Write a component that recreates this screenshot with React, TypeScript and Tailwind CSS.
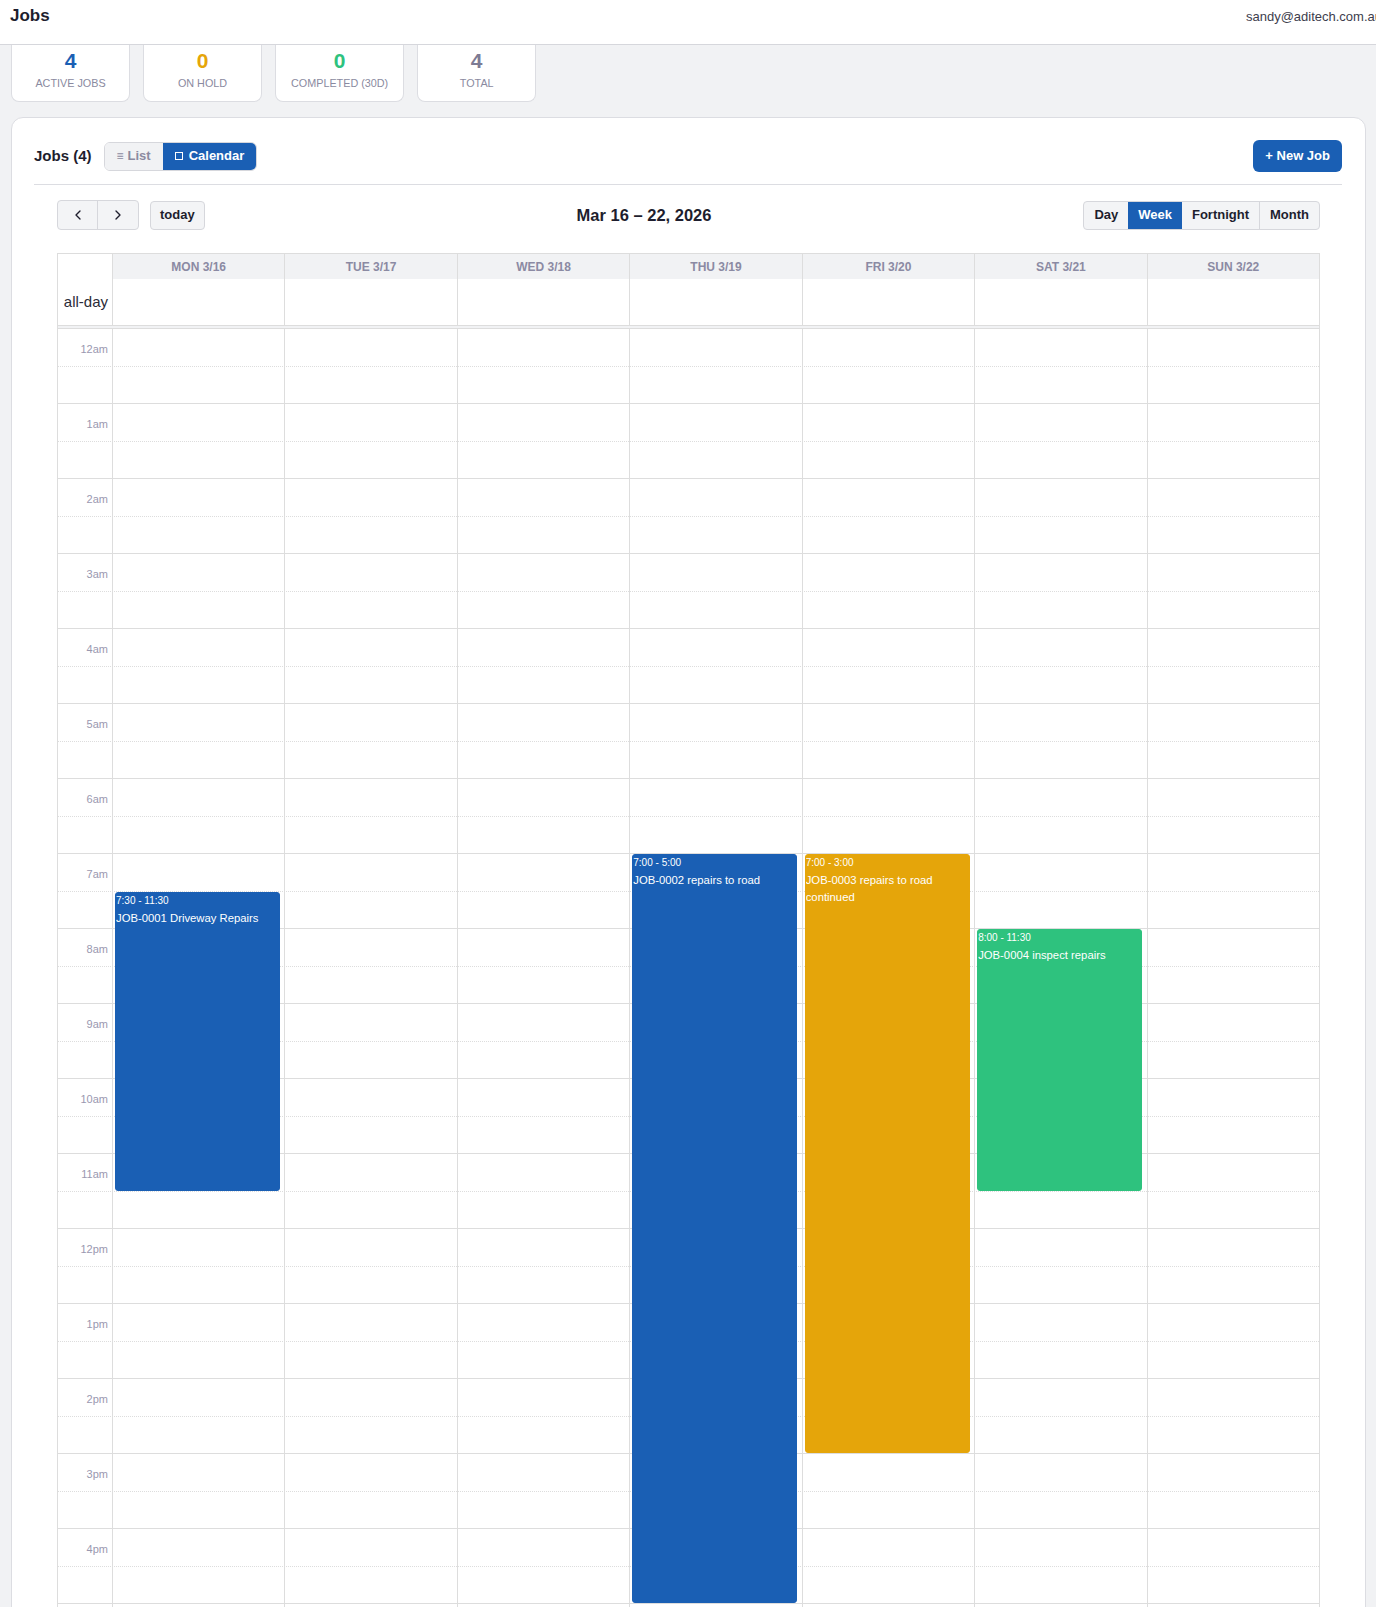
import React from "react";
import { ChevronLeft, ChevronRight } from "lucide-react";

const stats = [
  { value: "4", label: "Active Jobs", color: "text-[#1a5fb4]" },
  { value: "0", label: "On Hold", color: "text-[#e5a50a]" },
  { value: "0", label: "Completed (30d)", color: "text-[#2ec27e]" },
  { value: "4", label: "Total", color: "text-[#7d7b94]" },
];

const days = ["Mon 3/16", "Tue 3/17", "Wed 3/18", "Thu 3/19", "Fri 3/20", "Sat 3/21", "Sun 3/22"];

const hours = Array.from({ length: 24 }, (_, i) =>
  i === 0 ? "12am" : i < 12 ? `${i}am` : i === 12 ? "12pm" : `${i - 12}pm`
);

type CalEvent = { day: number; start: number; end: number; time: string; title: string; bg: string };

const events: CalEvent[] = [
  { day: 0, start: 7.5, end: 11.5, time: "7:30 - 11:30", title: "JOB-0001 Driveway Repairs", bg: "bg-[#1a5fb4] border-[#1a5fb4]" },
  { day: 3, start: 7, end: 17, time: "7:00 - 5:00", title: "JOB-0002 repairs to road", bg: "bg-[#1a5fb4] border-[#1a5fb4]" },
  { day: 4, start: 7, end: 15, time: "7:00 - 3:00", title: "JOB-0003 repairs to road continued", bg: "bg-[#e5a50a] border-[#e5a50a]" },
  { day: 5, start: 8, end: 11.5, time: "8:00 - 11:30", title: "JOB-0004 inspect repairs", bg: "bg-[#2ec27e] border-[#2ec27e]" },
];

const HOUR = 75;

const StatCard = ({ value, label, color }: { value: string; label: string; color: string }) => (
  <div className="min-w-[119px] px-[15px] pt-[3px] pb-[11px] bg-white border border-t-0 border-[#dcdde2] rounded-b-lg flex flex-col items-center">
    <span className={`text-[21px] leading-[26px] font-semibold ${color}`}>{value}</span>
    <span className="mt-[2px] text-[10.8px] leading-[14px] uppercase text-[#8a8aa0] whitespace-nowrap">{label}</span>
  </div>
);

const WeekCalendar = () => (
  <div className="border border-[#dddddd] mb-10">
    {/* day headings */}
    <div className="grid grid-cols-[54px_repeat(7,minmax(0,1fr))]">
      <div className="bg-white" />
      {days.map((d) => (
        <div
          key={d}
          className="h-[25px] border-l border-[#dddddd] bg-[#f1f2f4] flex items-center justify-center text-[12px] font-bold uppercase text-[#8b8aa3]"
        >
          {d}
        </div>
      ))}
    </div>
    {/* all-day row */}
    <div className="grid grid-cols-[54px_repeat(7,minmax(0,1fr))] h-[46px]">
      <div className="flex items-center justify-end pr-1 text-[15px] text-[#2b2b38]">all-day</div>
      {days.map((d) => (
        <div key={d} className="border-l border-[#dddddd]" />
      ))}
    </div>
    <div className="h-[4px] border-y border-[#dddddd] bg-[#f1f2f4]" />
    {/* time grid */}
    <div className="relative">
      {hours.map((h) => (
        <React.Fragment key={h}>
          <div className="h-[37.5px] flex border-b border-dotted border-[#dddddd]">
            <div className="w-[54px] flex items-center justify-end pr-1 pt-[3px] text-[11px] text-[#9a98b0]">{h}</div>
          </div>
          <div className="h-[37.5px] border-b border-[#dddddd]" />
        </React.Fragment>
      ))}
      <div className="absolute inset-0 grid grid-cols-[54px_repeat(7,minmax(0,1fr))]">
        <div />
        {days.map((d, i) => (
          <div key={d} className="relative border-l border-[#dddddd]">
            {events
              .filter((e) => e.day === i)
              .map((e) => (
                <div
                  key={e.title}
                  className={`absolute left-[2px] right-[2.5%] rounded-[3px] border text-white overflow-hidden ${e.bg}`}
                  style={{ top: e.start * HOUR, height: (e.end - e.start) * HOUR - 1 }}
                >
                  <div className="pt-px text-[10px] leading-[14px]">{e.time}</div>
                  <div className="mt-[2px] text-[11.3px] leading-[17px]">{e.title}</div>
                </div>
              ))}
          </div>
        ))}
      </div>
    </div>
  </div>
);

export default function App() {
  return (
    <div className="h-screen overflow-hidden bg-[#f1f2f4] font-['Liberation_Sans',Arial,sans-serif] text-[#1e1e2e]">
      <header className="h-[45px] bg-white border-b border-[#d6d7dc] flex items-start justify-between pl-[10px] overflow-hidden">
        <h1 className="pt-[6px] text-[17px] leading-[20px] font-semibold">Jobs</h1>
        <span className="pt-[7px] -mr-[6px] text-[13px] leading-[20px] text-[#3d3d4d] whitespace-nowrap">
          sandy@aditech.com.au
        </span>
      </header>

      <div className="pl-[11px] pr-[10px]">
        <div className="flex gap-[13px]">
          {stats.map((s) => (
            <StatCard key={s.label} {...s} />
          ))}
        </div>

        <section className="mt-[15px] bg-white border border-[#dcdde2] rounded-xl pl-[22px] pr-[23px] pt-[22px]">
          <div className="flex items-center justify-between pb-3 border-b border-[#dcdde2]">
            <div className="flex items-center gap-3">
              <h2 className="text-[15px] font-semibold">Jobs (4)</h2>
              <div className="flex h-[29px] rounded-md border border-[#d6d7dc] overflow-hidden text-[13px] font-semibold">
                <button className="px-3 bg-[#f1f2f4] text-[#8b8aa0] flex items-center gap-1">
                  <span className="text-[12px]">≡</span> List
                </button>
                <button className="px-3 bg-[#1a5fb4] text-white font-bold flex items-center gap-[6px]">
                  <span className="w-[8px] h-[8px] border border-white" /> Calendar
                </button>
              </div>
            </div>
            <button className="h-8 px-[12px] rounded-md bg-[#1a5fb4] text-white text-[13px] font-bold">+ New Job</button>
          </div>

          <div className="pl-[23px] pr-[22px] pt-[15px]">
            <div className="flex items-center justify-between mb-[23px]">
              <div className="flex items-center gap-[11px]">
                <div className="flex h-[30px] rounded border border-[#d6d7dc] bg-[#f3f4f6] overflow-hidden">
                  <button className="w-10 flex items-center justify-center border-r border-[#d6d7dc]">
                    <ChevronLeft size={16} strokeWidth={2} />
                  </button>
                  <button className="w-10 flex items-center justify-center">
                    <ChevronRight size={16} strokeWidth={2} />
                  </button>
                </div>
                <button className="h-[29px] px-[9px] rounded border border-[#d6d7dc] bg-[#f3f4f6] text-[13px] font-bold">
                  today
                </button>
              </div>
              <h3 className="text-[16.5px] font-bold">Mar 16 – 22, 2026</h3>
              <div className="flex h-[29px] rounded border border-[#d6d7dc] bg-[#f3f4f6] overflow-hidden text-[13px] font-bold">
                <button className="px-[10px]">Day</button>
                <button className="px-[10px] bg-[#1a5fb4] text-white">Week</button>
                <button className="px-[10px] border-r border-[#d6d7dc]">Fortnight</button>
                <button className="px-[10px]">Month</button>
              </div>
            </div>

            <WeekCalendar />
          </div>
        </section>
      </div>
    </div>
  );
}
